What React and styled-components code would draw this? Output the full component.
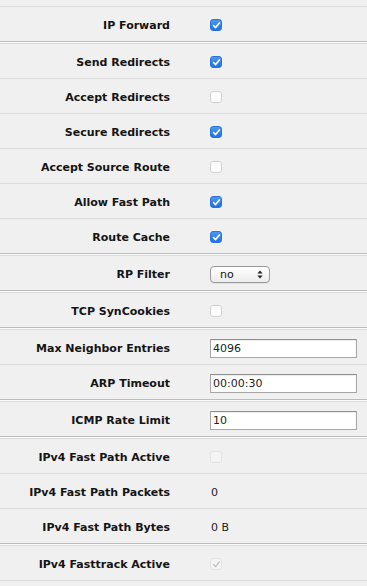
import React from "react";
import styled, { createGlobalStyle } from "styled-components";

const Global = createGlobalStyle`
  html, body { margin: 0; padding: 0; background: #f0f0f0; }
  body { font-family: "DejaVu Sans", Verdana, sans-serif; font-size: 11px; color: #1a1a1a; }
`;

const Page = styled.div`
  width: 367px;
  background: #f0f0f0;
  overflow: hidden;
`;

const Stub = styled.div`
  height: ${(p) => p.$h}px;
  border-top: ${(p) => (p.$line ? "1px solid #dcdcdc" : "none")};
`;

const Group = styled.div`
  border-top: ${(p) => (p.$first ? "none" : "1px solid #bcbcbc")};
  padding-top: ${(p) => (p.$first ? 0 : 1)}px;
  box-shadow: ${(p) => (p.$first ? "none" : "inset 0 1px 0 #fbfbfb")};
`;

const Row = styled.div`
  display: grid;
  grid-template-columns: 170px 1fr;
  column-gap: 40px;
  align-items: center;
  height: 34px;
  box-sizing: content-box;
  border-top: 1px solid #dcdcdc;
  padding-top: 2px;
  height: 32px;
`;

const Label = styled.div`
  text-align: right;
  font-weight: bold;
  font-size: 11px;
  white-space: nowrap;
  color: #141414;
`;

const Value = styled.div`
  display: flex;
  align-items: center;
  padding-left: 1px;
  font-size: 11px;
  color: #222;
`;

const Box = styled.span`
  display: inline-flex;
  align-items: center;
  justify-content: center;
  width: 12px;
  height: 12px;
  border-radius: 3px;
  box-sizing: border-box;
  margin-left: -1px;
  ${(p) =>
    p.$checked && !p.$disabled
      ? `background: linear-gradient(#4d97f3, #1f72e0); border: 1px solid #2a74d8;`
      : p.$disabled
      ? `background: #f4f4f4; border: 1px solid #e3e3e3;`
      : `background: #fff; border: 1px solid #cfcfcf;`}
`;

const Check = ({ checked, disabled }) => (
  <Box $checked={checked} $disabled={disabled}>
    {checked && (
      <svg width="9" height="9" viewBox="0 0 9 9">
        <path
          d="M1.6 4.7 L3.6 6.6 L7.4 1.9"
          fill="none"
          stroke={disabled ? "#b8b8b8" : "#fff"}
          strokeWidth={disabled ? 1.1 : 1.6}
          strokeLinecap="round"
          strokeLinejoin="round"
        />
      </svg>
    )}
  </Box>
);

const SelectBox = styled.div`
  display: flex;
  align-items: center;
  justify-content: space-between;
  width: 60px;
  height: 17px;
  box-sizing: border-box;
  margin-left: -1px;
  padding: 0 6px 0 9px;
  border: 1px solid #9a9a9a;
  border-radius: 4px;
  background: linear-gradient(#ffffff, #ececec);
  box-shadow: 0 1px 0 rgba(0, 0, 0, 0.06);
  font-size: 11px;
  color: #111;
`;

const Arrows = () => (
  <svg width="6" height="9" viewBox="0 0 6 9">
    <path d="M3 0.5 L5.6 3.6 L0.4 3.6 Z" fill="#222" />
    <path d="M3 8.5 L5.6 5.4 L0.4 5.4 Z" fill="#222" />
  </svg>
);

const TextInput = styled.div`
  width: 147px;
  height: 19px;
  box-sizing: border-box;
  margin-left: -1px;
  display: flex;
  align-items: center;
  padding-left: 2px;
  background: #fff;
  border: 1px solid #a7a7a7;
  border-top-color: #8f8f8f;
  box-shadow: inset 0 1px 1px rgba(0, 0, 0, 0.08);
  font-size: 11px;
  color: #222;
`;

const renderValue = (r) => {
  if (r.type === "check") return <Check checked={r.checked} disabled={r.disabled} />;
  if (r.type === "select")
    return (
      <SelectBox>
        <span>{r.value}</span>
        <Arrows />
      </SelectBox>
    );
  if (r.type === "input") return <TextInput>{r.value}</TextInput>;
  return <span>{r.value}</span>;
};

const groups = [
  [{ label: "IP Forward", type: "check", checked: true }],
  [
    { label: "Send Redirects", type: "check", checked: true },
    { label: "Accept Redirects", type: "check", checked: false },
    { label: "Secure Redirects", type: "check", checked: true },
    { label: "Accept Source Route", type: "check", checked: false },
    { label: "Allow Fast Path", type: "check", checked: true },
    { label: "Route Cache", type: "check", checked: true },
  ],
  [{ label: "RP Filter", type: "select", value: "no" }],
  [{ label: "TCP SynCookies", type: "check", checked: false }],
  [
    { label: "Max Neighbor Entries", type: "input", value: "4096" },
    { label: "ARP Timeout", type: "input", value: "00:00:30" },
  ],
  [{ label: "ICMP Rate Limit", type: "input", value: "10" }],
  [
    { label: "IPv4 Fast Path Active", type: "check", checked: false, disabled: true },
    { label: "IPv4 Fast Path Packets", type: "text", value: "0" },
    { label: "IPv4 Fast Path Bytes", type: "text", value: "0 B" },
  ],
  [{ label: "IPv4 Fasttrack Active", type: "check", checked: true, disabled: true }],
];

export default function App() {
  return (
    <Page>
      <Global />
      <Stub $h={6} />
      {groups.map((g, i) => (
        <Group key={i} $first={i === 0}>
          {g.map((r) => (
            <Row key={r.label}>
              <Label>{r.label}</Label>
              <Value>{renderValue(r)}</Value>
            </Row>
          ))}
        </Group>
      ))}
      <Stub $h={10} $line />
    </Page>
  );
}
